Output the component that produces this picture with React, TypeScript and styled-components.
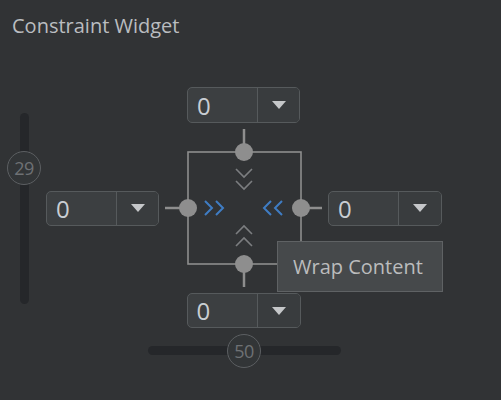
import React from "react";
import styled, { createGlobalStyle } from "styled-components";

const Global = createGlobalStyle`
  html, body { margin: 0; padding: 0; background: #313335; }
  * { box-sizing: border-box; }
`;

const Page = styled.div`
  width: 501px;
  height: 400px;
  background: #313335;
  overflow: hidden;
  font-family: "Open Sans", "Noto Sans", sans-serif;
  color: #bbbbbb;
`;

const Title = styled.div`
  padding: 13px 0 0 12px;
  font-size: 20px;
  line-height: 26px;
  height: 38px;
  color: #babdc0;
`;

const Workspace = styled.div`
  display: flex;
  align-items: flex-start;
  padding-left: 7px;
  margin-top: 49px;
`;

const VSliderCol = styled.div`
  width: 34px;
  padding-top: 26px;
  display: flex;
  justify-content: center;
`;

const VTrack = styled.div`
  position: relative;
  width: 9px;
  height: 191px;
  border-radius: 5px;
  background: #25272a;
`;

const HTrack = styled.div`
  position: relative;
  width: 193px;
  height: 9px;
  border-radius: 5px;
  background: #25272a;
  grid-column: 1 / -1;
  justify-self: center;
  margin-top: 18px;
`;

const Thumb = styled.div`
  position: absolute;
  width: 34px;
  height: 34px;
  margin: -17px 0 0 -17px;
  border-radius: 50%;
  border: 1.5px solid #5c5f62;
  background: #323537;
  color: #6e7174;
  font-size: 18px;
  display: flex;
  align-items: center;
  justify-content: center;
  letter-spacing: -0.5px;
`;

const Diagram = styled.div`
  position: relative;
  margin-left: 5px;
  display: grid;
  grid-template-columns: 113px 169px 114px;
  grid-template-rows: 36px 170px 35px auto;
  align-items: center;
`;

const Cell = styled.div<{ $col: number; $row: number }>`
  grid-column: ${(p) => p.$col};
  grid-row: ${(p) => p.$row};
  display: flex;
  justify-content: center;
  align-items: center;
`;

const DropBox = styled.div<{ $w: number; $h: number }>`
  width: ${(p) => p.$w}px;
  height: ${(p) => p.$h}px;
  display: flex;
  border: 1.5px solid #565a5c;
  border-radius: 5px;
  background: #3c3f41;
  overflow: hidden;
`;

const DropValue = styled.div`
  flex: 0 0 70px;
  padding-left: 9px;
  display: flex;
  align-items: center;
  font-size: 24px;
  color: #c9ced3;
  border-right: 1.5px solid #565a5c;
`;

const DropButton = styled.div`
  flex: 1;
  display: flex;
  align-items: center;
  justify-content: center;
  background: #393c3e;
`;

const Caret = styled.div`
  width: 0;
  height: 0;
  border-left: 7px solid transparent;
  border-right: 7px solid transparent;
  border-top: 8px solid #c5c7c9;
`;

const Tooltip = styled.div`
  position: absolute;
  left: 231px;
  top: 154px;
  width: 166px;
  height: 51px;
  background: #46494b;
  border: 1px solid #5f6264;
  display: flex;
  align-items: center;
  padding-left: 15px;
  font-size: 20px;
  color: #bbbcbd;
`;

function Dropdown({ w = 113, h = 36, value }: { w?: number; h?: number; value: string }) {
  return (
    <DropBox $w={w} $h={h}>
      <DropValue>{value}</DropValue>
      <DropButton>
        <Caret />
      </DropButton>
    </DropBox>
  );
}

function ConstraintGraphic() {
  const gray = "#8e8e8e";
  const chev = "#7c7e80";
  const blue = "#3f7dc4";
  return (
    <svg width="169" height="170" viewBox="0 0 169 170">
      <rect x="29" y="29" width="113" height="112" fill="none" stroke={gray} strokeWidth="1.6" />
      <line x1="85" y1="6" x2="85" y2="29" stroke={gray} strokeWidth="2.5" />
      <line x1="6" y1="85" x2="29" y2="85" stroke={gray} strokeWidth="2.5" />
      <line x1="142" y1="85" x2="163" y2="85" stroke={gray} strokeWidth="2.5" />
      <line x1="85" y1="141" x2="85" y2="164" stroke={gray} strokeWidth="2.5" />
      <circle cx="85" cy="29" r="9" fill={gray} />
      <circle cx="29" cy="85" r="9" fill={gray} />
      <circle cx="142" cy="85" r="9" fill={gray} />
      <circle cx="85" cy="141" r="9" fill={gray} />
      <g fill="none" stroke={chev} strokeWidth="1.6">
        <polyline points="77,46 85,54 93,46" />
        <polyline points="77,58 85,66 93,58" />
        <polyline points="77,111 85,103 93,111" />
        <polyline points="77,123 85,115 93,123" />
      </g>
      <g fill="none" stroke={blue} strokeWidth="2">
        <polyline points="46,78 53,85 46,92" />
        <polyline points="57,78 64,85 57,92" />
        <polyline points="112,78 105,85 112,92" />
        <polyline points="123,78 116,85 123,92" />
      </g>
    </svg>
  );
}

export default function App() {
  const vValue = 29;
  const hValue = 50;
  return (
    <Page>
      <Global />
      <Title>Constraint Widget</Title>
      <Workspace>
        <VSliderCol>
          <VTrack>
            <Thumb style={{ left: "50%", top: `${vValue}%` }}>{vValue}</Thumb>
          </VTrack>
        </VSliderCol>
        <Diagram>
          <Cell $col={2} $row={1}>
            <Dropdown value="0" />
          </Cell>
          <Cell $col={1} $row={2}>
            <Dropdown h={35} value="0" />
          </Cell>
          <Cell $col={2} $row={2}>
            <ConstraintGraphic />
          </Cell>
          <Cell $col={3} $row={2}>
            <Dropdown w={114} h={35} value="0" />
          </Cell>
          <Cell $col={2} $row={3}>
            <Dropdown w={114} h={35} value="0" />
          </Cell>
          <HTrack>
            <Thumb style={{ left: `${hValue}%`, top: "50%" }}>{hValue}</Thumb>
          </HTrack>
          <Tooltip>Wrap Content</Tooltip>
        </Diagram>
      </Workspace>
    </Page>
  );
}
